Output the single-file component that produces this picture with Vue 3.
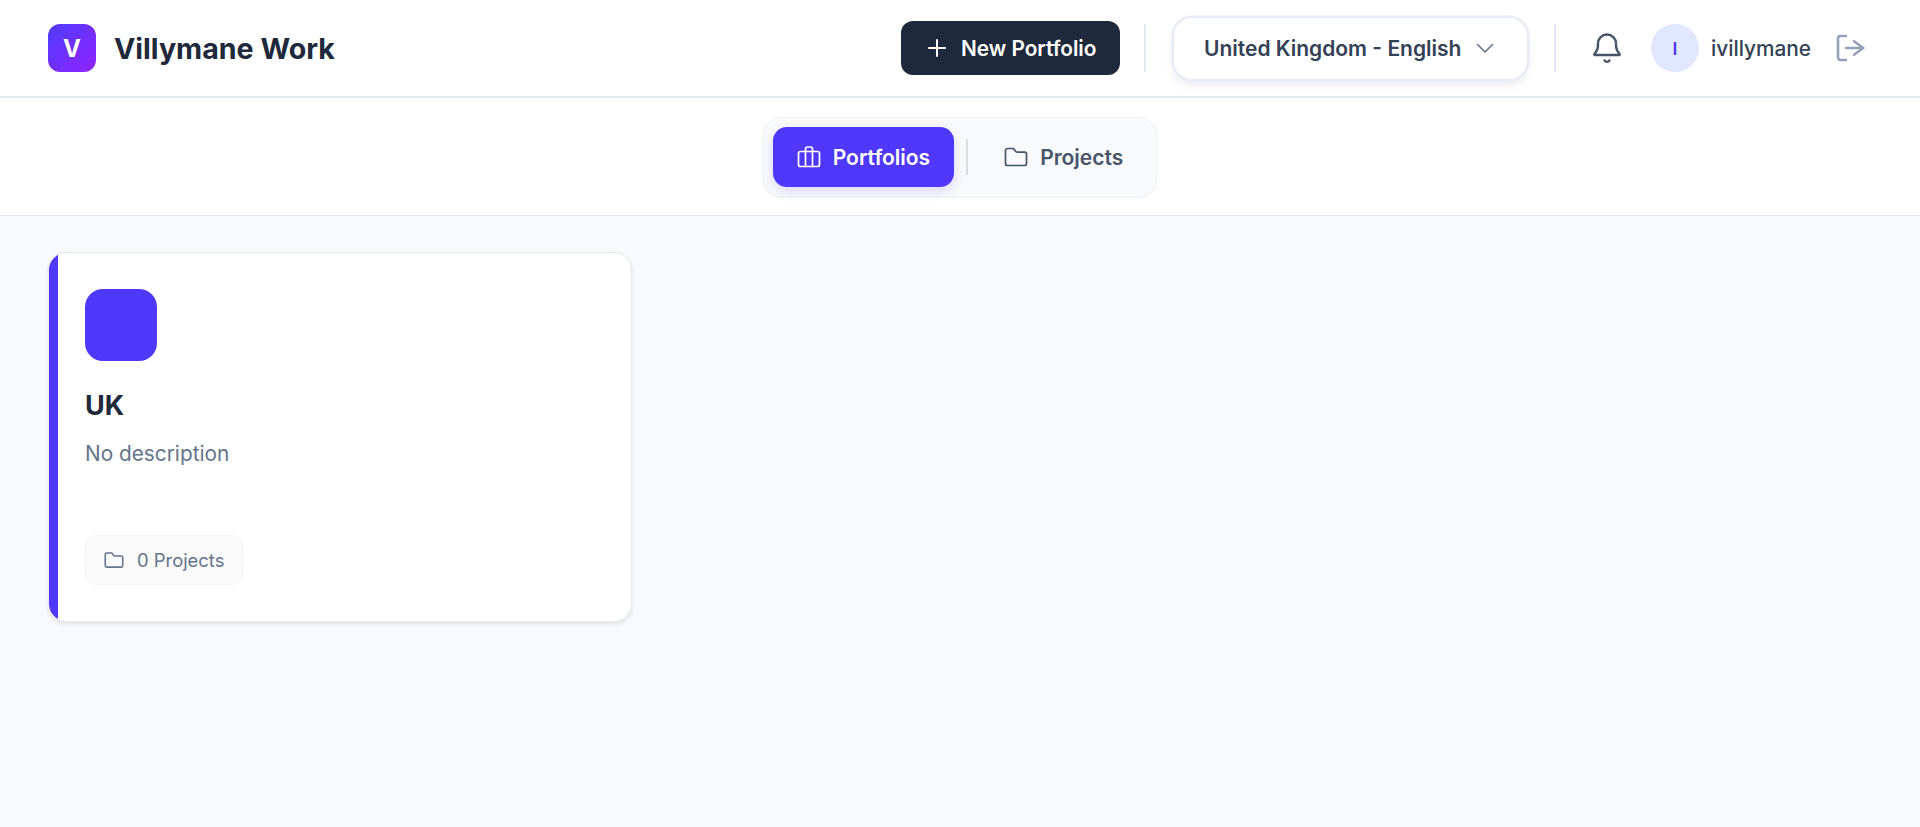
<template>
  <div class="page">
    <header class="topbar">
      <div class="brand">
        <div class="brand-logo">V</div>
        <span class="brand-name">Villymane Work</span>
      </div>
      <div class="actions">
        <button class="new-btn">
          <svg width="24" height="24" viewBox="0 0 24 24" fill="none" stroke="currentColor" stroke-width="2" stroke-linecap="round"><path d="M12 4v16M4 12h16" /></svg>
          <span>New Portfolio</span>
        </button>
        <div class="divider first"></div>
        <button class="locale">
          <span>United Kingdom - English</span>
          <svg width="24" height="24" viewBox="0 0 24 24" fill="none" stroke="#64748b" stroke-width="1.6" stroke-linecap="round" stroke-linejoin="round"><path d="M4.5 8.5l7.5 7.5 7.5-7.5" /></svg>
        </button>
        <div class="divider second"></div>
        <svg class="bell" width="36" height="36" viewBox="0 0 24 24" fill="none" stroke="#475569" stroke-width="1.6" stroke-linecap="round" stroke-linejoin="round"><path d="M6 9a6 6 0 0 1 12 0v1c0 2.6.8 4.3 2.4 6 .2.3 0 .7-.3.7H3.9c-.3 0-.5-.4-.3-.7C5.2 14.3 6 12.6 6 10z" /><path d="M10.3 20.3a2 2 0 0 0 3.4 0" /></svg>
        <div class="user">
          <div class="avatar">I</div>
          <span class="username">ivillymane</span>
        </div>
        <svg class="logout" width="32" height="32" viewBox="0 0 24 24" fill="none" stroke="#94a3b8" stroke-width="1.9" stroke-linecap="round" stroke-linejoin="round"><path d="M9 3H5a2 2 0 0 0-2 2v14a2 2 0 0 0 2 2h4" /><path d="M9 12h13M15 7l7 5-7 5" /></svg>
      </div>
    </header>

    <nav class="tabbar">
      <div class="tabs">
        <button class="tab active">
          <svg width="24" height="24" viewBox="0 0 24 24" fill="none" stroke="currentColor" stroke-width="1.7" stroke-linecap="round" stroke-linejoin="round"><rect x="1.5" y="6.5" width="21" height="15" rx="2" /><path d="M8.5 21.5V4a2 2 0 0 1 2-2h3a2 2 0 0 1 2 2v17.5" /></svg>
          <span>Portfolios</span>
        </button>
        <div class="tab-sep"></div>
        <button class="tab">
          <svg width="24" height="24" viewBox="0 0 24 24" fill="none" stroke="currentColor" stroke-width="1.7" stroke-linecap="round" stroke-linejoin="round"><path :d="folderPath" /></svg>
          <span>Projects</span>
        </button>
      </div>
    </nav>

    <main class="content">
      <article v-for="item in portfolios" :key="item.name" class="card">
        <div class="card-accent"></div>
        <div class="card-icon"></div>
        <h3 class="card-title">{{ item.name }}</h3>
        <p class="card-desc">{{ item.description }}</p>
        <div class="chip">
          <svg width="20" height="20" viewBox="0 0 24 24" fill="none" stroke="currentColor" stroke-width="1.9" stroke-linecap="round" stroke-linejoin="round"><path :d="folderPath" /></svg>
          <span>{{ item.projects }} Projects</span>
        </div>
      </article>
    </main>
  </div>
</template>

<script setup>
const folderPath = 'M1.5 18.5V5.5a2 2 0 0 1 2-2h5a2 2 0 0 1 1.6.8l1.4 2a2 2 0 0 0 1.6.8h7.4a2 2 0 0 1 2 2v9.4a2 2 0 0 1-2 2h-17a2 2 0 0 1-2-2z'

const portfolios = [
  { name: 'UK', description: 'No description', projects: 0 }
]
</script>

<style>
html, body {
  margin: 0;
  background: #f9fafb;
}
</style>

<style scoped>
.page {
  min-height: 827px;
  background: #f9fafb;
  font-family: Inter, "Liberation Sans", sans-serif;
}

button {
  font-family: inherit;
  border: none;
  cursor: pointer;
}

.topbar {
  height: 96px;
  padding: 0 54px 0 48px;
  display: flex;
  align-items: center;
  justify-content: space-between;
  background: #fff;
  border-bottom: 2px solid #e2e8f0;
}

.brand {
  display: flex;
  align-items: center;
  gap: 18px;
}

.brand-logo {
  width: 48px;
  height: 48px;
  border-radius: 12px;
  background: linear-gradient(135deg, #4f3cfa, #9123ff);
  color: #fff;
  font-size: 24px;
  font-weight: 700;
  display: flex;
  align-items: center;
  justify-content: center;
}

.brand-name {
  font-size: 28.6px;
  font-weight: 700;
  color: #1e293b;
}

.actions {
  display: flex;
  align-items: center;
}

.new-btn {
  height: 54px;
  padding: 0 24px;
  border-radius: 12px;
  background: #1e293b;
  color: #fff;
  font-size: 20.8px;
  font-weight: 600;
  display: flex;
  align-items: center;
  gap: 12px;
}

.divider {
  width: 1.5px;
  height: 48px;
  background: #e2e8f0;
}

.divider.first {
  margin: 0 28px 0 24px;
}

.divider.second {
  margin: 0 33px 0 27px;
}

.locale {
  height: 61px;
  padding: 0 30px;
  border-radius: 18px;
  background: #fff;
  color: #334155;
  font-size: 21px;
  font-weight: 600;
  box-shadow: 0 0 0 2.5px #e8ebf6, 0 6px 10px rgba(79, 70, 160, 0.12);
  display: flex;
  align-items: center;
  gap: 12px;
}

.user {
  display: flex;
  align-items: center;
  gap: 12px;
  margin-left: 26px;
}

.avatar {
  width: 48px;
  height: 48px;
  border-radius: 50%;
  background: #e0e7ff;
  color: #5038fa;
  font-size: 17.6px;
  font-weight: 600;
  display: flex;
  align-items: center;
  justify-content: center;
}

.username {
  font-size: 20.8px;
  font-weight: 500;
  color: #334155;
}

.logout {
  margin-left: 23px;
}

.tabbar {
  height: 118px;
  box-sizing: border-box;
  display: flex;
  justify-content: center;
  padding-top: 19px;
  background: #fff;
  border-bottom: 1px solid #e2e8f0;
}

.tabs {
  height: 80px;
  box-sizing: border-box;
  padding: 9px;
  display: flex;
  align-items: center;
  gap: 12px;
  background: #f9fafb;
  border: 1px solid #f1f3f6;
  border-radius: 18px;
  box-shadow: 0 1px 2px rgba(0, 0, 0, 0.05);
}

.tab {
  height: 60px;
  padding: 0 24px;
  border-radius: 14px;
  background: transparent;
  color: #475569;
  font-size: 21px;
  font-weight: 600;
  display: flex;
  align-items: center;
  gap: 12px;
}

.tab.active {
  background: #5038fa;
  color: #fff;
  box-shadow: 0 4px 12px rgba(80, 56, 250, 0.18);
}

.tab-sep {
  width: 2px;
  height: 36px;
  background: #d9dce2;
}

.content {
  padding: 36px 48px;
}

.card {
  position: relative;
  overflow: hidden;
  width: 584px;
  height: 370px;
  box-sizing: border-box;
  padding: 36px 28px 36px 36px;
  display: flex;
  flex-direction: column;
  align-items: flex-start;
  background: #fff;
  border: 1px solid #e8eaef;
  border-radius: 18px;
  box-shadow: 0 2px 4px rgba(0, 0, 0, 0.1);
}

.card-accent {
  position: absolute;
  left: 0;
  top: 0;
  bottom: 0;
  width: 9px;
  background: #5038fa;
}

.card-icon {
  width: 72px;
  height: 72px;
  border-radius: 18px;
  background: #5038fa;
}

.card-title {
  margin: 28px 0 0;
  font-size: 27px;
  font-weight: 700;
  color: #1e293b;
}

.card-desc {
  margin: 19px 0 0;
  font-size: 20.8px;
  color: #64748b;
}

.chip {
  margin-top: auto;
  height: 50px;
  box-sizing: border-box;
  padding: 0 18px 0 18px;
  display: flex;
  align-items: center;
  gap: 13px;
  background: #fafafa;
  border: 1px solid #f3f4f6;
  border-radius: 12px;
  color: #64748b;
  font-size: 18.4px;
}
</style>
